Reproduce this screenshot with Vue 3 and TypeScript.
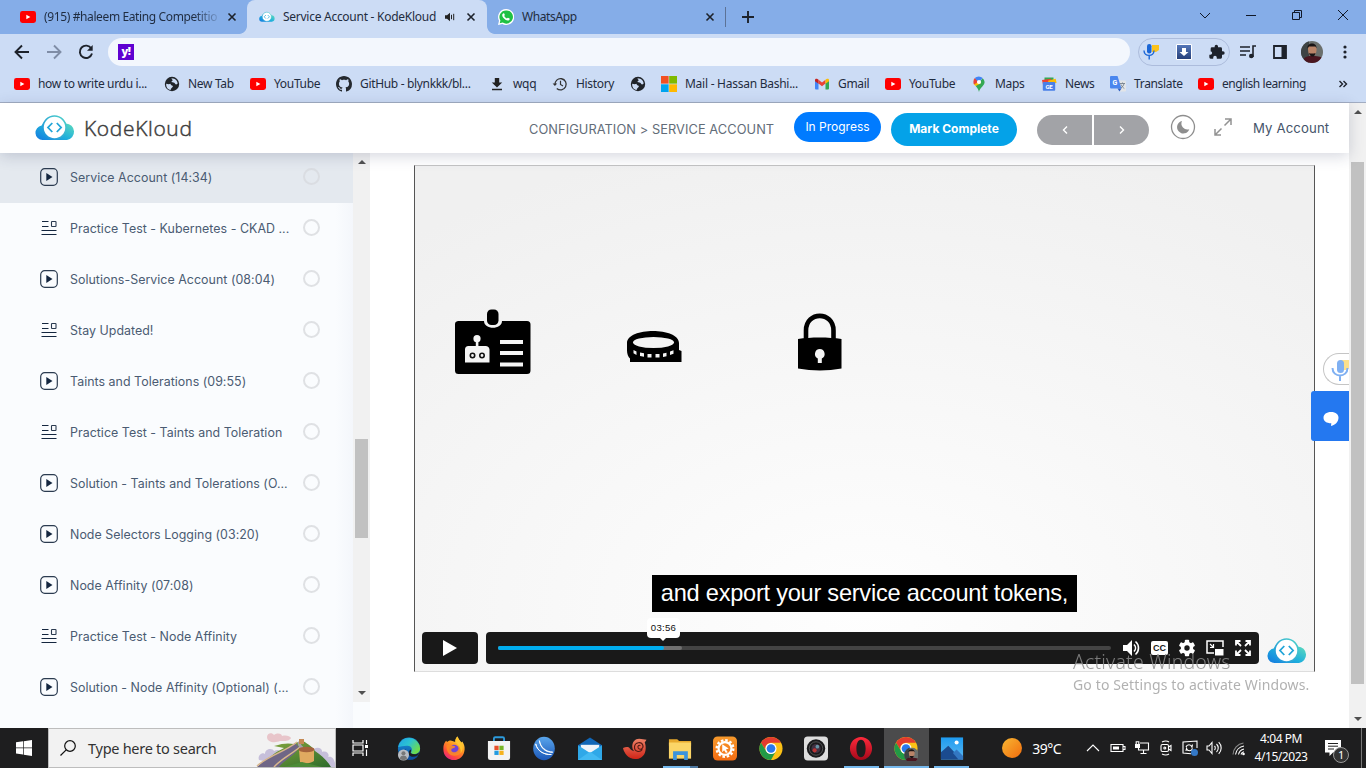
<script setup lang="ts">
interface Bookmark { icon: string; label: string }
interface Lesson { kind: 'video' | 'quiz'; title: string; active?: boolean }
interface App { icon: string; running?: boolean; active?: boolean; grouped?: boolean }

const bookmarks: Bookmark[] = [
  { icon: 'youtube', label: 'how to write urdu i...' },
  { icon: 'globe', label: 'New Tab' },
  { icon: 'youtube', label: 'YouTube' },
  { icon: 'github', label: 'GitHub - blynkkk/bl...' },
  { icon: 'download', label: 'wqq' },
  { icon: 'history', label: 'History' },
  { icon: 'globe', label: '' },
  { icon: 'microsoft', label: 'Mail - Hassan Bashi...' },
  { icon: 'gmail', label: 'Gmail' },
  { icon: 'youtube', label: 'YouTube' },
  { icon: 'maps', label: 'Maps' },
  { icon: 'news', label: 'News' },
  { icon: 'translate', label: 'Translate' },
  { icon: 'youtube', label: 'english learning' },
]

const lessons: Lesson[] = [
  { kind: 'video', title: 'Service Account (14:34)', active: true },
  { kind: 'quiz', title: 'Practice Test - Kubernetes - CKAD ...' },
  { kind: 'video', title: 'Solutions-Service Account (08:04)' },
  { kind: 'quiz', title: 'Stay Updated!' },
  { kind: 'video', title: 'Taints and Tolerations (09:55)' },
  { kind: 'quiz', title: 'Practice Test - Taints and Toleration' },
  { kind: 'video', title: 'Solution - Taints and Tolerations (O...' },
  { kind: 'video', title: 'Node Selectors Logging (03:20)' },
  { kind: 'video', title: 'Node Affinity (07:08)' },
  { kind: 'quiz', title: 'Practice Test - Node Affinity' },
  { kind: 'video', title: 'Solution - Node Affinity (Optional) (...' },
]

const apps: App[] = [
  { icon: 'edge' },
  { icon: 'firefox' },
  { icon: 'store' },
  { icon: 'swoosh' },
  { icon: 'mail' },
  { icon: 'shell' },
  { icon: 'folder', running: true, grouped: true },
  { icon: 'uc' },
  { icon: 'chrome' },
  { icon: 'camera' },
  { icon: 'opera', running: true },
  { icon: 'chromeuser', running: true, active: true },
  { icon: 'photos', running: true },
]
</script>

<template>
  <div class="screen">
    <svg class="defs" width="0" height="0" aria-hidden="true">
      <defs>
        <linearGradient id="gCloud" x1="0" y1="1" x2="1" y2="0"><stop offset="0" stop-color="#1478e0" /><stop offset=".45" stop-color="#1fb0dc" /><stop offset="1" stop-color="#6fe6b4" /></linearGradient>
        <linearGradient id="gRing" x1="0" y1="1" x2="1" y2="0"><stop offset="0" stop-color="#1b8ddd" /><stop offset="1" stop-color="#4fd3c9" /></linearGradient>
        <linearGradient id="gEdge" x1="0" y1="0" x2="1" y2=".6"><stop offset="0" stop-color="#1fa3e6" /><stop offset=".5" stop-color="#2cc3d2" /><stop offset="1" stop-color="#6fdc4a" /></linearGradient>
        <linearGradient id="gEdge2" x1="0" y1="0" x2="0" y2="1"><stop offset="0" stop-color="#1b9de2" /><stop offset="1" stop-color="#0c4a9c" /></linearGradient>
        <linearGradient id="gFox" x1=".8" y1="0" x2=".2" y2="1"><stop offset="0" stop-color="#ffe14a" /><stop offset=".4" stop-color="#ff9a1f" /><stop offset=".75" stop-color="#ff4a3d" /><stop offset="1" stop-color="#e0208a" /></linearGradient>
        <linearGradient id="gBlue" x1="0" y1="0" x2="0" y2="1"><stop offset="0" stop-color="#5aa6ec" /><stop offset="1" stop-color="#1b57b8" /></linearGradient>
        <linearGradient id="gShell" x1="0" y1="0" x2="0" y2="1"><stop offset="0" stop-color="#ee8066" /><stop offset="1" stop-color="#cf2417" /></linearGradient>
        <linearGradient id="gUc" x1="0" y1="0" x2="0" y2="1"><stop offset="0" stop-color="#f79a2c" /><stop offset="1" stop-color="#f36c12" /></linearGradient>
        <linearGradient id="gOpera" x1="0" y1="0" x2="0" y2="1"><stop offset="0" stop-color="#ff2a3c" /><stop offset="1" stop-color="#a5091a" /></linearGradient>
        <linearGradient id="gPhoto" x1="0" y1="0" x2="0" y2="1"><stop offset="0" stop-color="#1e9bf0" /><stop offset="1" stop-color="#5cb8f2" /></linearGradient>
        <linearGradient id="gSun" x1="0" y1="0" x2="1" y2="1"><stop offset="0" stop-color="#f7b733" /><stop offset="1" stop-color="#f26c0d" /></linearGradient>
        <linearGradient id="gHill" x1="0" y1="0" x2="1" y2="1"><stop offset="0" stop-color="#8dac3f" /><stop offset="1" stop-color="#2d6b2b" /></linearGradient>
        <linearGradient id="gDl" x1="0" y1="0" x2="0" y2="1"><stop offset="0" stop-color="#5578ba" /><stop offset="1" stop-color="#253f78" /></linearGradient>
        <clipPath id="cAvatar"><circle cx="11" cy="11" r="11" /></clipPath>
      </defs>

      <symbol id="i-youtube" viewBox="0 0 16 16"><rect y="2" width="16" height="12" rx="2.4" fill="#f00" /><path d="M6.3 5.7v4.6L10.4 8z" fill="#fff" /></symbol>
      <symbol id="i-globe" viewBox="0 0 16 16"><circle cx="8" cy="8" r="7.2" fill="#202429" /><path d="M2.2 7.7c2 .6 3.200.6 4.200 0 .7 1 .4 1.500 1.600 1.700 1 .3 1 .9.600 1.700-.6.900-1.800 1.300-1.900 2.800C3.600 13.500 1.900 11 2.200 7.700zM7.600 2.200c-.2 1 .9 1.300 1 2 .1.800-1.200.6-1.100 1.500.2 1 1.700.6 2.700 1 .9.500.9 1.700 2 1.700.8 0 .9-.7 1.500-.8C13.500 5 11.500 2.300 7.600 2.200z" fill="#ccdcf5" /></symbol>
      <symbol id="i-github" viewBox="0 0 16 16"><path fill="#24292f" d="M8 0C3.580 0 0 3.580 0 8c0 3.540 2.290 6.530 5.470 7.590.4.070.55-.17.55-.38 0-.19-.01-.82-.01-1.490-2.010.37-2.530-.49-2.690-.94-.09-.23-.48-.94-.82-1.130-.28-.15-.68-.52-.01-.53.63-.01 1.080.58 1.230.82.72 1.210 1.870.87 2.330.66.07-.52.28-.87.51-1.070-1.780-.2-3.640-.89-3.640-3.950 0-.87.31-1.590.82-2.150-.08-.2-.36-1.020.08-2.120 0 0 .67-.21 2.200.82.64-.18 1.320-.27 2-.27s1.360.09 2 .27c1.530-1.040 2.200-.82 2.200-.82.44 1.100.16 1.920.08 2.120.51.56.82 1.270.82 2.150 0 3.070-1.870 3.750-3.650 3.950.29.25.54.73.54 1.480 0 1.070-.01 1.930-.01 2.200 0 .21.15.46.55.38A8.010 8.010 0 0016 8c0-4.420-3.580-8-8-8z" /></symbol>
      <symbol id="i-download" viewBox="0 0 16 16"><path d="M5.800 2h4.400v4.500h3L8 11.400 2.800 6.500h3zM3 12.700h10v1.600H3z" fill="#222" /></symbol>
      <symbol id="i-history" viewBox="0 0 16 16"><path d="M3 8.800a5.600 5.600 0 1 1 1.800 3.600" fill="none" stroke="#333" stroke-width="1.300" /><path d="M.6 7.400h4.600L2.900 10z" fill="#333" /><path d="M8.500 4.800v3.600l2.500 1.500" fill="none" stroke="#333" stroke-width="1.200" /></symbol>
      <symbol id="i-microsoft" viewBox="0 0 16 16"><path d="M0 0h7.600v7.600H0z" fill="#f25022" /><path d="M8.200 0H16v7.600H8.200z" fill="#7fba00" /><path d="M0 8.300h7.600V16H0z" fill="#00a4ef" /><path d="M8.200 8.300H16V16H8.200z" fill="#ffb900" /></symbol>
      <symbol id="i-gmail" viewBox="0 0 16 16"><path d="M1 4.500 4.500 7v6.500H2a1 1 0 0 1-1-1z" fill="#4285f4" /><path d="M15 4.500 11.500 7v6.500H14a1 1 0 0 0 1-1z" fill="#34a853" /><path d="M4.500 3.800 8 6.500l3.500-2.700v3.800L8 10.200 4.500 7.600z" fill="#ea4335" /><path d="M1 4v1.200l3.500 2.600V3.800l-1-.8C2.400 2.200 1 2.800 1 4z" fill="#c5221f" /><path d="M15 4v1.200l-3.500 2.600V3.800l1-.8c1.100-.8 2.500-.2 2.500 1z" fill="#fbbc04" /></symbol>
      <symbol id="i-maps" viewBox="0 0 16 16"><path d="M8 16c-.6-2.800-2-4.300-3.300-5.900L11.700 2.300A5.700 5.700 0 0 1 13.600 6c0 4-4.600 5-5.600 10z" fill="#34a853" /><path d="M4.700 10.100A7 7 0 0 1 2.600 7.500L7 4.500l2.600 2.900z" fill="#fbbc04" /><path d="M2.400 6a5.600 5.600 0 0 1 1.400-3.900L8 5.600 3 8.400A6 6 0 0 1 2.400 6z" fill="#ea4335" /><path d="M3.800 2.100A5.600 5.600 0 0 1 11.700 2L7.500 6.600z" fill="#4285f4" /><circle cx="8" cy="6" r="2.100" fill="#fff" /></symbol>
      <symbol id="i-news" viewBox="0 0 16 16"><path d="M3.500 1.500h9v6h-9z" fill="#34a853" /><path d="m1 4 9-1.200 1 5-9 1z" fill="#ea4335" /><path d="m7 4.800 7.700-2 .9 4L8 9z" fill="#fbbc04" /><rect x="1.800" y="5.900" width="12.400" height="8.900" rx=".8" fill="#4a80e8" /><text x="8" y="12.500" text-anchor="middle" font-size="6" font-weight="700" font-family="Roboto, sans-serif" fill="#fff">GE</text></symbol>
      <symbol id="i-translate" viewBox="0 0 16 16"><path d="M6.500 4.500H15a1 1 0 0 1 1 1V14.500a1 1 0 0 1-1 1H9.500z" fill="#e3e5e8" /><path d="M1 0h6.500l4 12.500H1.300A1.200 1.200 0 0 1 0 11.300V1A1 1 0 0 1 1 0z" fill="#4a86ee" /><path d="m7.500 12.500 4 0-2 3z" fill="#2f5fc4" /><text x="4.700" y="8.700" text-anchor="middle" font-size="7" font-weight="700" font-family="Roboto, sans-serif" fill="#fff">G</text><path d="M10 7.500h5M12.500 6.500v1M14 7.500c-.5 2-1.500 3.500-3 4.500M11 8.500c.5 1.800 2 3 3.300 4" stroke="#75808c" stroke-width=".9" fill="none" /></symbol>
      <symbol id="i-whatsapp" viewBox="0 0 16 16"><path d="M8 0a8 8 0 0 0-7 11.800L0 16l4.300-1A8 8 0 1 0 8 0z" fill="#fff" /><path d="M8 1.400a6.600 6.600 0 0 0-5.600 10l-.7 2.900 3-.8A6.600 6.600 0 1 0 8 1.400z" fill="#1fc143" /><path d="M5.600 4.200c.5 0 .7.300 1.200 1.600.1.500-.5.900-.6 1.200.6 1.200 1.500 2 2.700 2.500.4-.2.700-.9 1.100-.8l1.600.8c.3 1.400-.8 2.100-1.700 2.100-2.800-.2-5.600-3-5.700-5.500 0-.9.700-1.800 1.400-1.900z" fill="#fff" /></symbol>
      <symbol id="i-kloud" viewBox="0 0 40 26">
        <path d="M7.500 25A7.300 7.300 0 0 1 6.600 10.500 14 14 0 0 1 14 4h12a11 11 0 0 1 5 4.500A8.300 8.300 0 0 1 32 25z" fill="url(#gCloud)" />
        <circle cx="19.500" cy="12.500" r="11.500" fill="#fff" stroke="url(#gRing)" stroke-width="1.500" />
        <path d="m17.300 8-4.300 4.500 4.300 4.500M21.800 8l4.300 4.500-4.300 4.500" fill="none" stroke="#22a5d8" stroke-width="1.800" />
      </symbol>
      <symbol id="i-avatar" viewBox="0 0 22 22"><g clip-path="url(#cAvatar)"><path d="M0 0h22v22H0z" fill="#6b706d" /><path d="M0 0h8v22H0z" fill="#3d4344" /><path d="M1 22c1-6 5-7 9-7 6 0 10 0 12 3v4z" fill="#4a1620" /><path d="M7 7c0-4 8-4 8.500 0 .4 4-1 8-4.300 8S7 12 7 7z" fill="#b98468" /><path d="M6.500 7.500C5.500 1.500 16 .5 15.500 7.500l-1-2-6.500 0zM8 12c1 .8 5 .8 6.500 0-.4 2.500-1.600 3.600-3.200 3.600S8.500 14 8 12z" fill="#191516" /></g></symbol>

      <symbol id="i-edge" viewBox="0 0 26 26"><circle cx="13" cy="13" r="12" fill="url(#gEdge2)" /><path d="M1.200 11.500A12 12 0 0 1 25 13c0 4-3 6-6.500 6-2.500 0-4-1-3-2.500 1.500-2 .7-6-4-6.500-4-.3-7.500 1-10.300 1.500z" fill="url(#gEdge)" /><path d="M10 13c-1.500 5 2 9 8 9 2 0 3.500-.5 5-1.500-3 5-9 6-13 3.500-4-3-4-8 0-11z" fill="#0e4f9f" /><path d="M14.500 14c2 2-1 3 1 4.500 3 1.500 7 .5 8.500-1.500-.5 3-3 5-6.500 5-4 0-7-3.500-3-8z" fill="#1e1e1f" /><circle cx="7" cy="20" r="6" fill="#b8bcc2" /><circle cx="7" cy="18.200" r="2.200" fill="#777" /><path d="M3.200 24c0-4.500 7.600-4.500 7.600 0-2 1.800-5.600 1.800-7.600 0z" fill="#777" /></symbol>
      <symbol id="i-firefox" viewBox="0 0 26 26"><path d="M2 9c.5-2 1.500-3.500 2.500-4.500L5.500 6c2-1.500 3-1.700 4-1.600L14.500 6c-.3-2.500.5-4.500 2.500-6 .5 3 2.500 4.500 4 6.500l1-1c2 3 2.700 5.500 2.500 8.500C24 21 19 25.500 13 25.500S1.500 21 1.500 14c0-2 0-3.500.5-5z" fill="url(#gFox)" /><circle cx="13" cy="14.500" r="5.500" fill="#7143d6" /><path d="M5 9.500c3-1.500 5-1 6.500.5 1.500.2 2.500.5 3 1-1 2-4 1-4.500 3.500 0 2 3 3.500 5.500 2 2-1.200 3.500-4 2.500-7 3.500 2 3.800 6 1.500 9-2.500 3-9 3.500-12 0-2-2.500-3-5.500-2.500-9z" fill="#ff8a21" opacity=".9" /><path d="M17 0c.5 3 2.500 4.500 4 6.500 2.500 4 1.500 9-1 12 1-5-1-8-5.500-12.500C14.200 3.500 15 1.500 17 0z" fill="#ffc52e" /></symbol>
      <symbol id="i-store" viewBox="0 0 26 26"><path d="M7.500 5V2.300C7.500 1.300 8 .8 9 .8h8c1 0 1.500.5 1.500 1.500V5" fill="none" stroke="#2d9bdc" stroke-width="2" /><path d="M1 5h24v18a2.500 2.500 0 0 1-2.500 2.500h-19A2.500 2.500 0 0 1 1 23z" fill="#f3f3f3" /><path d="M8 10h4.600v4.600H8z" fill="#e8502a" /><path d="M13.400 10H18v4.600h-4.600z" fill="#77b525" /><path d="M8 15.400h4.600V20H8z" fill="#239be0" /><path d="M13.400 15.400H18V20h-4.600z" fill="#f6b21c" /></symbol>
      <symbol id="i-swoosh" viewBox="0 0 26 26"><ellipse cx="13" cy="13" rx="11.700" ry="12.700" fill="url(#gBlue)" /><path d="M4 8c2 8 9 12 17 11.500-8 .5-15.500-4-17-11.500zM8 4.500c1 7 7 12 14.500 12.500-8 .5-13.500-5-14.500-12.500z" fill="#fff" stroke="#fff" stroke-width="1" /></symbol>
      <symbol id="i-mail" viewBox="0 0 26 26"><path d="M0 9.500 13 1l13 8.500V25.500H0z" fill="#1067b8" /><path d="M3 9h20v9H3z" fill="#eef4fa" /><path d="M0 9.500 13 18l13-8.500V25.500H0z" fill="#2fa8e8" /><path d="m0 25.500 12-8.500h2l12 8.500z" fill="#42b9f2" /></symbol>
      <symbol id="i-shell" viewBox="0 0 26 26"><path d="M0 12.500c3-1.500 6-1.500 7 0 2 2.500 3 3 5 3.500a7 7 0 0 1-2-5c0-5 3-8.500 7.500-8.500 3 0 5.500 1 8 1l-2 3c2.500 6 1.500 18-10.500 18C6 24.500 1 18 0 12.500z" fill="url(#gShell)" /><path d="M21 14c-3 4-9 2.500-8.500-3 .5-5 7.500-6 9-1.500 1.200 4-3.500 5.500-5 3-1-2 .8-3.800 2.300-2.500" fill="none" stroke="#511a15" stroke-width="1.200" /></symbol>
      <symbol id="i-folder" viewBox="0 0 26 26"><path d="M1 3h9l2 2h13v5H1z" fill="#e7a92d" /><path d="M1 6.500h24V24H1z" fill="#fbd567" /><path d="M5.500 16h16V25.500h-4v-5.500h-8v5.500h-4z" fill="#3b93dc" /></symbol>
      <symbol id="i-uc" viewBox="0 0 26 26"><rect x="0" y="0" width="26" height="26" rx="5" fill="url(#gUc)" /><circle cx="13" cy="13" r="9" fill="none" stroke="#fff" stroke-width="2.600" stroke-dasharray="2.700 2.010" /><circle cx="13" cy="13" r="7" fill="none" stroke="#fff" stroke-width="2.400" /><path d="M10 8.500 17 13l-3 1 2 3-2 1-2-3-2 2z" fill="#fff" /></symbol>
      <symbol id="i-chrome" viewBox="0 0 26 26"><circle cx="13" cy="13" r="12.500" fill="#fbc116" /><path d="M2.200 6.700a12.500 12.500 0 0 1 21.600 0H13a6 6 0 0 0-5.200 9.300z" fill="#e33b2e" /><path d="M2.200 6.700A12.500 12.500 0 0 0 13 25.500l5.200-9.500A6 6 0 0 1 7.800 16z" fill="#229a46" /><circle cx="13" cy="13" r="6" fill="#fff" /><circle cx="13" cy="13" r="4.700" fill="#2979ec" /></symbol>
      <symbol id="i-camera" viewBox="0 0 26 26"><rect x="0" y="0" width="26" height="26" rx="4" fill="#dedede" /><circle cx="13" cy="13" r="10" fill="#1a1a1c" /><circle cx="13" cy="13" r="7.300" fill="none" stroke="#666" stroke-width=".8" /><circle cx="13" cy="13" r="5" fill="#413142" /><circle cx="11.500" cy="15" r="2.200" fill="#b33" /><circle cx="14.500" cy="11" r="2" fill="#6993a5" /></symbol>
      <symbol id="i-opera" viewBox="0 0 26 26"><path fill-rule="evenodd" d="M13 .5C19.500.5 25 6 25 13S19.500 25.500 13 25.500 1 20 1 13 6.500.5 13 .5zM13 3.500C9.500 3.500 8 8 8 13s1.500 9.500 5 9.500 5-4.500 5-9.500-1.500-9.500-5-9.500z" fill="url(#gOpera)" /></symbol>
      <symbol id="i-chromeuser" viewBox="0 0 26 26"><use href="#i-chrome" x="0" y="0" width="26" height="26" /><use href="#i-avatar" x="11" y="12" width="16" height="16" /></symbol>
      <symbol id="i-photos" viewBox="0 0 26 26"><path d="M1 1h24v24H1z" fill="url(#gPhoto)" /><path d="m1 17 8-7 14 15H1z" fill="#1b4b8f" /><path d="m14 18 4-4 7 7v4h-5z" fill="#3377c2" /><circle cx="18" cy="6.500" r="2.200" fill="#fff" /></symbol>
    </svg>

    <header class="browser">
      <div class="tabs">
        <div class="tab first"><svg class="i16"><use href="#i-youtube" /></svg><span class="tab-title fade">(915) #haleem Eating Competitio</span><svg class="close" viewBox="0 0 8 8"><path d="m.5.5 7 7m0-7-7 7" /></svg></div>
        <div class="tab current">
          <svg class="i16"><use href="#i-kloud" /></svg><span class="tab-title">Service Account - KodeKloud</span>
          <svg class="speaker" viewBox="0 0 10 10"><path d="M0 3.300h2L5 .8v8.400L2 6.700H0z" fill="#222" /><path d="M6.500 2.800v4.400M8.700 1.800v6.400" stroke="#222" fill="none" /></svg>
          <svg class="close" viewBox="0 0 8 8"><path d="m.5.5 7 7m0-7-7 7" /></svg>
        </div>
        <div class="tab third"><svg class="i16"><use href="#i-whatsapp" /></svg><span class="tab-title">WhatsApp</span><svg class="close" viewBox="0 0 8 8"><path d="m.5.5 7 7m0-7-7 7" /></svg></div>
        <svg class="newtab" viewBox="0 0 12 12"><path d="M6 0v12M0 6h12" stroke="#1d222b" stroke-width="1.900" /></svg>
        <div class="winctl">
          <svg viewBox="0 0 10 10"><path d="m0 3 5 5 5-5" /></svg>
          <svg viewBox="0 0 10 10"><path d="M0 5.500h10" /></svg>
          <svg viewBox="0 0 10 10"><path d="M.5 2.500h7v7h-7zM2.500 2.500v-2h7v7h-2" /></svg>
          <svg viewBox="0 0 10 10"><path d="m0 0 10 10M10 0 0 10" /></svg>
        </div>
      </div>
      <div class="toolbar">
        <svg class="nav" viewBox="0 0 16 16"><path d="M15 8H2M8 1.500 1.500 8 8 14.500" /></svg>
        <svg class="nav dim" viewBox="0 0 16 16"><path d="M1 8h13M8 1.500 14.500 8 8 14.500" /></svg>
        <svg class="nav" viewBox="0 0 16 16"><path d="M13.300 4.500A6.200 6.200 0 1 0 14 9.500" /><path d="M14.700 1v5.800H9z" fill="#1d222b" stroke="none" /></svg>
        <div class="omnibox"><span class="yahoo">y!</span></div>
        <div class="exts">
          <svg width="16" height="16" viewBox="0 0 16 16"><path d="M8 1h7v5l-3 2H8z" fill="#fbc21b" /><rect x="3" y="0" width="4.500" height="9.500" rx="2.200" fill="#1a66d6" /><path d="M0 6.500C0 13 10 13 10 6.500M5.200 11v4.500" fill="none" stroke="#1a66d6" stroke-width="1.400" /></svg>
          <svg width="16" height="16" viewBox="0 0 16 16"><path d="M.5.500h15v15H.5z" fill="url(#gDl)" stroke="#fff" /><path d="M6 4h4v4h2.500L8 12 3.500 8H6z" fill="#fff" /></svg>
          <svg width="16" height="16" viewBox="0 0 24 24"><path fill="#1d222b" d="M22.500 11H21V7a2 2 0 0 0-2-2h-4V3.500a2.500 2.500 0 0 0-5 0V5H6a2 2 0 0 0-2 2v3.800h-.500a2.700 2.700 0 0 1 0 5.400H2V20a2 2 0 0 0 2 2h3.800v-1.500a2.700 2.700 0 0 1 5.400 0V22H19a2 2 0 0 0 2-2v-4h1.500a2.500 2.500 0 0 0 0-5z" /></svg>
        </div>
        <svg class="t1" viewBox="0 0 16 14"><path d="M0 2h10M0 6h10M0 10h6M13 12V1h3" stroke="#1d222b" stroke-width="1.600" fill="none" /><circle cx="11.300" cy="11" r="2.300" fill="#1d222b" /></svg>
        <svg class="t2" viewBox="0 0 14 14"><path d="M1 1h12v12H1z" fill="none" stroke="#1d222b" stroke-width="1.800" /><path d="M8.500 1H13v12H8.500z" fill="#1d222b" /></svg>
        <svg class="t3"><use href="#i-avatar" /></svg>
        <svg class="t4" viewBox="0 0 4 14"><circle cx="2" cy="2" r="1.600" /><circle cx="2" cy="7" r="1.600" /><circle cx="2" cy="12" r="1.600" /></svg>
      </div>
      <nav class="bookmarks">
        <span v-for="(b, i) in bookmarks" :key="i" class="bm"><svg class="i16"><use :href="'#i-' + b.icon" /></svg><span>{{ b.label }}</span></span>
        <svg class="more" viewBox="0 0 8 8"><path d="m.5 1 3 3-3 3M4.500 1l3 3-3 3" fill="none" stroke="#1d222b" stroke-width="1.400" /></svg>
      </nav>
    </header>

    <div class="page">
      <div class="site">
        <header class="topbar">
          <svg class="logo"><use href="#i-kloud" /></svg>
          <span class="brand">KodeKloud</span>
          <span class="crumbs">CONFIGURATION &gt; SERVICE ACCOUNT</span>
          <span class="progress">In Progress</span>
          <span class="complete">Mark Complete</span>
          <div class="pager">
            <span><svg viewBox="0 0 6 8"><path d="M5 .5 1.500 4 5 7.500" /></svg></span>
            <span><svg viewBox="0 0 6 8"><path d="M1 .5 4.500 4 1 7.500" /></svg></span>
          </div>
          <svg class="moon" viewBox="0 0 26 26"><circle cx="13" cy="13" r="11.500" fill="none" stroke="#8e8e8e" stroke-width="1.300" /><path d="M12 7a6.300 6.300 0 1 0 7.300 8.200A6 6 0 0 1 12 7z" fill="#8e8e8e" /></svg>
          <svg class="expand" viewBox="0 0 18 18"><path d="M10.500 7.500 17 1M11 1h6v6M7.500 10.500 1 17M1 11v6h6" fill="none" stroke="#929292" stroke-width="1.500" /></svg>
          <span class="account">My Account</span>
        </header>

        <div class="body">
          <aside class="sidebar">
            <ul>
              <li v-for="l in lessons" :key="l.title" :class="{ active: l.active }">
                <svg v-if="l.kind === 'video'" class="kind" viewBox="0 0 18 18"><rect x=".7" y=".7" width="16.600" height="16.600" rx="4" fill="none" stroke="#2b3b50" stroke-width="1.200" /><path d="M6.300 5v8l6.200-4z" fill="#14263f" /></svg>
                <svg v-else class="kind" viewBox="0 0 18 18"><path d="M2 2.500h6.500M2 7.500h6.500M1.500 11.500h15M1.500 15.500h15" stroke="#14263f" stroke-width="1.100" /><rect x="11.500" y="2.500" width="4.500" height="5" rx=".6" fill="none" stroke="#2b3b50" stroke-width="1.100" /></svg>
                <span class="title">{{ l.title }}</span><i class="ring"></i>
              </li>
            </ul>
            <div class="scroll side"><i class="up"></i><b></b><i class="down"></i></div>
          </aside>

          <main class="content">
            <section class="video">
              <svg class="glyphs" viewBox="0 0 430 100">
                <path d="M28 31h26c0 9 18 9 18 0h25a3.500 3.500 0 0 1 3.500 3.500v46a3.500 3.500 0 0 1-3.500 3.500H28.500a3.500 3.500 0 0 1-3.500-3.500v-46A3.500 3.500 0 0 1 28 31z" fill="#000" />
                <rect x="57" y="19.500" width="11.500" height="15.500" rx="4.500" fill="#000" />
                <circle cx="47" cy="48.700" r="3.600" fill="#f4f4f4" /><path d="M45.800 50h2.600v7h-2.600zM35 59.500a3.500 3.500 0 0 1 3.500-3.500h17a4 4 0 0 1 4 3.500V72.500H35zM70 50h23v4H70zM70 61h23v4H70zM70 72.500h23v4H70z" fill="#f4f4f4" />
                <g fill="none" stroke="#111" stroke-width="1.600"><circle cx="42.500" cy="65.500" r="2.200" /><circle cx="52" cy="65.500" r="2.200" /></g>
                <path d="M197 53c0-16 52-16 52 0v7l2.500 1v11H200v-3.500c-2-1.500-3-5-3-8z" fill="#000" /><ellipse cx="223.500" cy="52.500" rx="20.500" ry="5.500" fill="#f4f4f4" />
                <path d="m203.500 60 3 1.500v3.500l-3-1.800zM210 62.500l4 .8v3.500l-4-.8zM217.500 64h4v3.500h-4zM225.500 64h4v3.500h-4zM233 63.500l3.500-.7v3.500l-3.500.7zM240 61.500l3.500-1.300v3.500L240 65z" fill="#f4f4f4" />
                <path d="M376 52V40.500c0-19.500 27.500-19.500 27.500 0v11.500" fill="none" stroke="#000" stroke-width="4.600" />
                <path d="M368 49c12-2 31-2 43.500 0v29.500c-14 2.500-29 2.500-43.500 0z" fill="#000" /><path d="M389.800 59a5 5 0 0 1 2 9.500v4.500h-4v-4.500a5 5 0 0 1 2-9.500z" fill="#f4f4f4" />
              </svg>
              <div class="caption">and export your service account tokens,</div>
              <div class="controls">
                <button class="play" aria-label="Play"><svg viewBox="0 0 14 16"><path d="M0 0v16l14-8z" fill="#fff" /></svg></button>
                <div class="bar">
                  <div class="track"><i class="buffer"></i><i class="played"></i><span class="tip">03:56</span></div>
                  <svg class="c1" viewBox="0 0 18 18"><path d="M0 6h4l5-5v16l-5-5H0z" fill="#fff" /><path d="M11 5.500c2 2 2 5 0 7M12.500 2.500c4 3.500 4 9.500 0 13" fill="none" stroke="#fff" stroke-width="1.600" /></svg>
                  <span class="cc">CC</span>
                  <svg class="c3" viewBox="0 0 18 18"><g fill="#fff"><circle cx="9" cy="9" r="6.200" /><rect v-for="a in [0, 60, 120]" :key="a" x="6.800" y=".8" width="4.400" height="16.400" rx="1" :transform="`rotate(${a} 9 9)`" /></g><circle cx="9" cy="9" r="2.700" fill="#191919" /></svg>
                  <svg class="c4" viewBox="0 0 18 16"><path d="M8 13H1V1h16v6" fill="none" stroke="#fff" stroke-width="1.500" /><path d="M9 9h8.500v6.500H9z" fill="#fff" /><path d="m4 4 3 3M7.500 4v3.500H4" fill="none" stroke="#fff" stroke-width="1.200" /></svg>
                  <svg class="c5" viewBox="0 0 16 16"><path d="M1 5.500V1h4.500M10.500 1H15v4.500M15 10.500V15h-4.500M5.500 15H1v-4.500M1 1l5 5M15 1l-5 5M1 15l5-5M15 15l-5-5" fill="none" stroke="#fff" stroke-width="1.800" /></svg>
                </div>
                <svg class="logo"><use href="#i-kloud" /></svg>
              </div>
            </section>
            <div class="mic"><svg viewBox="0 0 20 22"><path d="M10 1h9v8l-4 2h-5z" fill="#fbe08a" /><rect x="6" y="1" width="7" height="13" rx="3.500" fill="#7fb0f2" /><path d="M1.500 9c0 10 15 10 15 0M9 16.500V22" fill="none" stroke="#7fb0f2" stroke-width="2" /></svg></div>
            <div class="chat"><svg viewBox="0 0 16 14"><path d="M8 0c5 0 7.500 2.500 7.500 5.500 0 4-3 7.500-7.500 8.500l.3-2.800C3.500 11.200.5 9 .5 5.700S3.500 0 8 0z" fill="#fff" /></svg></div>
          </main>
        </div>
      </div>
      <div class="scroll main"><i class="up"></i><b></b><i class="down"></i></div>
      <div class="activate"><p>Activate Windows</p><small>Go to Settings to activate Windows.</small></div>
    </div>

    <footer class="taskbar">
      <svg class="start" viewBox="0 0 16 16"><path d="M0 2.300 7 1.300v6.200H0zM7.700 1.200 16 0v7.500H7.700zM0 8.200h7v6.300l-7-1zM7.700 8.200H16V16l-8.300-1.300z" fill="#fff" /></svg>
      <div class="search">
        <svg class="lens" viewBox="0 0 16 16"><circle cx="10" cy="6" r="5.300" fill="none" stroke="#111" stroke-width="1.200" /><path d="M6.200 9.800.5 15.500" stroke="#111" stroke-width="1.200" /></svg>
        <span>Type here to search</span>
        <svg class="scene" viewBox="0 0 80 38">
          <path d="M11 8c0-4 5-5 7-2 4-3 8-1 8 1 4-1 8 0 9 2-2 4-9 3-11 3-4 2-13 2-13-4z" fill="#e8c5ca" />
          <path d="M3 31c-2-5 4-8 6-6 0-6 8-6 9-3 5-3 8 1 7 4l-8 8zM58 20c4-3 9 0 8 3 5-2 8 3 6 5 4-1 6 2 7 6v4H56z" fill="#c6bfda" />
          <path d="M18 17c9-3 15-3 20-2l8-4c5 4 9 5 13 11 6 4 12 9 16 16H4c8-9 14-14 24-19z" fill="url(#gHill)" />
          <path d="M1 38c10-11 27-16 38-24l4 4c-3 8-15 13-20 20z" fill="#6f6686" /><path d="M1 37c12-11 28-14 40-24M18 38c8-9 18-13 26-20" stroke="#d9b78c" stroke-width="1.500" fill="none" />
          <path d="M43 13c0 6 6 8 12 10" fill="none" stroke="#a3a1ac" stroke-width="3" /><path d="M43 10h5v5h-5z" fill="#c58a55" />
          <path d="M43 21h15v11c-4 3-11 3-14 1z" fill="#e0aa60" /><ellipse cx="50.500" cy="20.500" rx="8" ry="2.700" fill="#a4633c" /><path d="m28 38 18-5 20 5z" fill="#4c8b37" />
        </svg>
      </div>
      <svg class="taskview" viewBox="0 0 16 16"><path d="M1 0v3h10V0M1 16v-3h10v3M1 5h10v6H1zM14.500 0v4M14.500 9.500V16" fill="none" stroke="#fff" stroke-width="1.200" /><path d="M13 5h3v3h-3z" fill="#fff" /></svg>
      <div class="apps">
        <div v-for="a in apps" :key="a.icon" class="app" :class="{ running: a.running, active: a.active, grouped: a.grouped }"><svg><use :href="'#i-' + a.icon" /></svg></div>
      </div>
      <svg class="sun" viewBox="0 0 20 20"><circle cx="10" cy="10" r="10" fill="url(#gSun)" /></svg>
      <span class="temp">39°C</span>
      <div class="tray">
        <svg viewBox="0 0 16 16"><path d="M2 11l6-6 6 6" /></svg>
        <svg viewBox="0 0 16 16"><path d="M1 4.500h12v7H1zM13.500 6.500H15v3h-1.500" /><path d="M3 6.500h6v3H3z" fill="#fff" stroke="none" /></svg>
        <svg viewBox="0 0 16 16"><path d="M6 3h8.500v7H4.500V8M9.500 10v3.500M6.500 13.500h6" /><path d="M1 4h5v4H1z" fill="#fff" stroke="none" /><path d="M2.200 4V1.800h2.600V4" /></svg>
        <svg viewBox="0 0 16 16"><rect x="3" y="4.500" width="7.500" height="7" rx="1.500" /><path d="M10.500 7 13 5.500v5L10.500 9M4 2c2.500-1.300 5-1.300 7 0M4 14c2.500 1.300 5 1.300 7 0" /><circle cx="6.800" cy="8" r="1" /></svg>
        <svg viewBox="0 0 16 16"><path d="M15 8V1L1 2v11l8 .7" /><path d="M4 7c1-3 5-3 6 0l.5-2.500M10.500 8.500c-1 3-5 3-6 0L4 11" /><circle cx="12.500" cy="12.500" r="3.500" fill="#3478c6" stroke="none" /></svg>
        <svg viewBox="0 0 16 16"><path d="M0 6h2l3-3.500v11L2 10H0zM7.500 6c1 1 1 3 0 4M9.500 4c2.300 2.300 2.300 5.700 0 8M11.700 2.200c3.300 3.300 3.300 8.300 0 11.600" /></svg>
        <svg viewBox="0 0 16 16"><path d="M4.500 14.500A10 10 0 0 1 13 6M7.500 14.500A7 7 0 0 1 13 9M10 14.500a4 4 0 0 1 3-2.800" /><path d="M2 14.500A12 12 0 0 1 12.500 3" stroke="#888" /><circle cx="12.500" cy="14" r="1.300" fill="#fff" stroke="none" /></svg>
      </div>
      <div class="clock"><span>4:04 PM</span><span>4/15/2023</span></div>
      <div class="notify"><svg viewBox="0 0 16 16"><path d="M0 0h16v12.500H8L4.500 16v-3.500H0z" fill="#fff" /><path d="M3 3.500h10M3 6.200h10M3 9h6" stroke="#222" /></svg><em>1</em></div>
      <i class="peek"></i>
    </footer>
  </div>
</template>

<style>
html, body { margin: 0; overflow: hidden; }
</style>

<style scoped>
* { box-sizing: border-box; }
.screen { width: 1366px; height: 768px; overflow: hidden; position: relative; display: flex; flex-direction: column; background: #fff; font-family: "Noto Sans", "Open Sans", sans-serif; color: #1f2c40; }
.defs { position: absolute; }
svg { display: block; flex: none; overflow: visible; }
.i16 { width: 16px; height: 16px; }

.browser { height: 103px; flex: none; background: #ccdcf5; border-bottom: 1px solid #a2adc2; font-size: 12px; }
.tabs { height: 34px; background: #85ade8; display: flex; align-items: center; position: relative; }
.tab { height: 34px; display: flex; align-items: center; flex: none; }
.tab-title { white-space: nowrap; letter-spacing: -0.27px; flex: none; margin-top: -1px; }
.first { width: 247px; padding: 0 11px 0 20px; }
.first .tab-title { width: 174px; margin-left: 8px; letter-spacing: -0.38px; }
.fade { -webkit-mask-image: linear-gradient(90deg, #000 150px, transparent 178px); mask-image: linear-gradient(90deg, #000 150px, transparent 178px); }
.first .close { margin-left: 10px; }
.current { width: 240px; background: #ccdcf5; border-radius: 8px 8px 0 0; padding-left: 12px; }
.current .tab-title { width: 154px; margin-left: 8px; }
.speaker { width: 10px; height: 10px; margin-left: 8px; }
.current .close { margin-left: 12px; }
.third { padding-left: 11px; }
.third .tab-title { width: 176px; margin-left: 8px; letter-spacing: -.4px; }
.third .close { margin-left: 8px; }
.third::after { content: ""; width: 1px; height: 20px; background: #5c7296; margin-left: 11px; }
.tabs::before { content: ""; position: absolute; left: 239px; bottom: 0; width: 256px; height: 8px; background: radial-gradient(circle at 0 0, #85ade8 7.500px, #ccdcf5 8.300px) left / 8px 8px no-repeat, radial-gradient(circle at 100% 0, #85ade8 7.500px, #ccdcf5 8.300px) right / 8px 8px no-repeat; }
.close { width: 8px; height: 8px; stroke: #1d222b; stroke-width: 1.600; }
.newtab { width: 12px; height: 12px; margin-left: 16px; }
.winctl { margin-left: auto; display: flex; gap: 36px; padding-right: 18px; margin-top: -5px; }
.winctl svg { width: 10px; height: 10px; stroke: #101828; fill: none; stroke-width: 1; }
.toolbar { height: 36px; display: flex; align-items: center; padding-left: 14px; }
.nav { width: 16px; height: 16px; margin-right: 16px; fill: none; stroke: #1d222b; stroke-width: 1.900; }
.nav.dim { stroke: #7f8da6; }
.nav:nth-child(3) { margin-right: 14px; }
.omnibox { width: 1022px; height: 28px; border-radius: 14px; background: #f3f7fd; padding: 6px 10px; }
.yahoo { display: block; width: 16px; height: 16px; background: #5f01d1; color: #fff; font: 800 11px/14px "Open Sans", sans-serif; text-align: center; letter-spacing: -0.500px; }
.exts { width: 92px; height: 28px; border: 1px solid #acbcdc; border-radius: 14px; margin-left: 8px; display: flex; gap: 16px; align-items: center; padding-left: 5px; }
.exts svg { width: 16px; }
.t1 { width: 16px; height: 14px; margin-left: 10px; }
.t2 { width: 14px; height: 14px; margin-left: 17px; }
.t3 { width: 22px; height: 22px; margin-left: 14px; }
.t4 { width: 4px; height: 14px; margin-left: 20px; fill: #1d222b; }
.bookmarks { height: 28px; padding-left: 14px; display: grid; align-items: center; grid-template-columns: 150px 86px 86px 153px 63px 78px 31px 153px 71px 86px 70px 69px 88px 141px 8px; }
.bm { display: flex; align-items: center; gap: 8px; white-space: nowrap; letter-spacing: -0.330px; }
.bm:nth-child(8) { letter-spacing: -.26px; }
.bm:nth-child(14) { letter-spacing: -.44px; }
.bm span { margin-top: -1px; }
.more { width: 8px; height: 8px; }

.page { height: 625px; display: flex; position: relative; }
.site { width: 1349px; height: 625px; display: flex; flex-direction: column; }
.topbar { height: 50px; flex: none; display: flex; align-items: center; background: #fff; box-shadow: 0 3px 14px rgba(40, 50, 90, .2); position: relative; z-index: 2; padding-left: 35px; font-family: Inter, sans-serif; white-space: nowrap; }
.logo { width: 40px; height: 26px; }
.brand { font: 300 21px/28px "Open Sans", sans-serif; color: #3c3c3c; margin-left: 9px; width: 109px; letter-spacing: .65px; -webkit-text-stroke: .45px #3c3c3c; margin-top: -1px; }
.crumbs { margin-left: 336px; width: 245px; font-size: 12.800px; color: #626c78; letter-spacing: .08px; margin-top: 3px; }
.progress { margin-left: 20px; width: 87px; height: 30px; border-radius: 15px; background: #007bff; color: #fff; font-size: 12px; line-height: 30px; text-align: center; margin-top: -2px; }
.complete { margin-left: 10px; width: 126px; height: 33px; border-radius: 17px; background: #04a2e8; color: #fff; font-size: 12px; font-weight: 700; line-height: 32px; text-align: center; margin-top: 2px; }
.pager { display: flex; gap: 2px; margin-left: 20px; margin-top: 4px; }
.pager span { width: 55px; height: 30px; background: #a2a3a7; display: grid; place-items: center; }
.pager span:first-child { border-radius: 15px 0 0 15px; }
.pager span:last-child { border-radius: 0 15px 15px 0; }
.pager svg { width: 6px; height: 8px; fill: none; stroke: #fff; stroke-width: 1.400; }
.moon { width: 26px; height: 26px; margin-left: 21px; margin-top: -2px; }
.expand { width: 18px; height: 18px; margin-left: 18px; margin-top: -2px; }
.account { margin-left: 21px; font-size: 13.200px; letter-spacing: .12px; color: #45546a; }

.body { flex: 1; display: flex; min-height: 0; }
.sidebar { width: 370px; background: #fafcfe; display: flex; overflow: hidden; }
ul { margin: -1px 0 0; padding: 0; width: 353px; list-style: none; background: linear-gradient(90deg, transparent 95%, rgba(225, 230, 242, .25)); }
li { height: 51px; display: flex; align-items: center; padding-left: 40px; font: 400 12.400px/20px Inter, sans-serif; color: #4a5b72; }
li.active { background: #e4e9ef; }
.kind { width: 18px; height: 18px; margin-top: -2px; }
.title { margin-left: 12px; width: 233px; white-space: nowrap; letter-spacing: .04px; margin-top: 1px; }
.ring { width: 17px; height: 17px; border: 2px solid #dfe1e4; border-radius: 50%; margin-top: -2px; }
.active .ring { border-color: #dadde2; }
.scroll { width: 17px; background: #f1f1f1; display: flex; flex-direction: column; align-items: center; flex: none; }
.scroll b { width: 13px; background: #c1c1c1; }
.scroll i { width: 0; height: 0; border: 4px solid transparent; }
.scroll .up { border-top: 0; border-bottom-color: #505050; }
.scroll .down { border-bottom: 0; border-top-color: #505050; }
.side { height: 549px; padding-top: 7px; }
.side b { height: 99px; margin: 275px 0 153px; }
.main { height: 625px; padding-top: 7px; }
.main b { height: 522px; margin: 48px 0 33px; }

.content { flex: 1; padding: 12px 0 0 44px; position: relative; }
.video { width: 901px; height: 507px; border: 1px solid #555; border-top-color: #c4c4c4; border-bottom-color: #ddd; background: radial-gradient(ellipse 720px 480px at 50% 88%, #fefefe 0%, #f7f7f7 50%, #f0f0f0 100%); position: relative; }
.glyphs { position: absolute; left: 15px; top: 124px; width: 430px; height: 100px; }
.caption { position: absolute; left: 237px; top: 409px; width: 425px; height: 37px; background: #000; color: #fff; font: 23.600px/36px "Liberation Sans", Arial, sans-serif; text-align: center; white-space: nowrap; letter-spacing: -.25px; }
.controls { position: absolute; left: 7px; top: 466px; display: flex; }
.play { width: 56px; height: 32px; border: 0; border-radius: 4px; background: #191919; padding: 0 0 0 21px; }
.play svg { width: 14px; height: 16px; }
.bar { margin-left: 8px; width: 773px; height: 32px; border-radius: 4px; background: #191919; display: flex; align-items: center; padding-left: 12px; }
.track { width: 613px; height: 4px; background: #444; border-radius: 2px; position: relative; }
.track i { position: absolute; left: 0; top: 0; height: 4px; border-radius: 2px; }
.track .buffer { width: 184px; background: #717171; }
.track .played { width: 166px; background: #00adef; }
.tip { position: absolute; left: 149px; top: -28px; width: 33px; height: 20px; border-radius: 4px; background: #fff; color: #111; font: 9.600px/19px "Liberation Sans", Arial, sans-serif; letter-spacing: .25px; text-align: center; }
.tip::after { content: ""; position: absolute; left: 13px; top: 20px; border: 3px solid transparent; border-top-color: #fff; }
.c1 { width: 18px; height: 18px; margin-left: 12px; }
.cc { width: 17px; height: 14px; background: #fff; color: #191919; border-radius: 2px; margin-left: 10px; font: 700 9px/14px "Liberation Sans", Arial, sans-serif; text-align: center; }
.c3 { width: 18px; height: 18px; margin-left: 10px; }
.c4 { width: 18px; height: 16px; margin-left: 10px; }
.c5 { width: 16px; height: 16px; margin-left: 11px; }
.controls .logo { margin: 6px 0 0 8px; }
.mic { position: absolute; right: 0; top: 200px; width: 26px; height: 32px; border: 1px solid #c5c5c5; border-right: 0; border-radius: 16px 0 0 16px; background: #fff; overflow: hidden; }
.mic svg { width: 20px; height: 22px; margin: 5px 0 0 7px; }
.chat { position: absolute; right: 0; top: 238px; width: 38px; height: 50px; border-radius: 3px 0 0 3px; background: #2478f0; display: grid; place-items: center; padding: 5px 0 0 2px; }
.chat svg { width: 16px; height: 14px; }
.activate { position: absolute; left: 1073px; top: 547px; color: #8d8d8d; opacity: .85; z-index: 4; white-space: nowrap; }
.activate p { margin: 0; font-size: 19.500px; line-height: 24px; font-weight: 300; letter-spacing: .2px; }
.activate small { display: block; font-size: 14px; line-height: 20px; color: #a4a4a4; margin-top: 1px; letter-spacing: .13px; }

.taskbar { height: 40px; background: #1e1e1f; display: flex; align-items: center; color: #fff; position: relative; }
.start { width: 16px; height: 16px; margin-left: 16px; flex: none; }
.search { width: 288px; height: 40px; flex: none; margin-left: 16px; background: #f2f2f2; border: 1px solid #bdbdbd; color: #333; display: flex; align-items: center; padding-left: 11px; font-size: 14.500px; overflow: hidden; white-space: nowrap; letter-spacing: -.27px; }
.search span { width: 168px; margin-left: 12px; flex: none; }
.lens { width: 16px; height: 16px; }
.scene { width: 80px; height: 38px; }
.taskview { width: 16px; height: 16px; margin-left: 16px; }
.apps { display: flex; margin-left: 18px; height: 40px; }
.app { width: 45.250px; height: 40px; display: grid; place-items: center; position: relative; flex: none; }
.app svg { width: 24px; height: 25px; }
.app.active { background: #4b4b4c; }
.app.running::after { content: ""; position: absolute; bottom: 0; left: 5px; right: 5px; height: 2px; background: #76b9ed; }
.app.active::after { left: 0; right: 0; }
.app.grouped::after { background: linear-gradient(90deg, #76b9ed 78%, #4d77a0 78%); }
.sun { width: 20px; height: 20px; margin-left: 28px; }
.temp { font-size: 14px; margin-left: 10px; width: 53px; letter-spacing: -.5px; }
.tray { display: flex; gap: 8.300px; }
.tray svg { width: 16px; height: 16px; fill: none; stroke: #fff; stroke-width: 1.100; }
.clock { width: 70px; margin-left: -1px; font-size: 12px; line-height: 18px; display: flex; flex-direction: column; text-align: center; letter-spacing: -.45px; white-space: nowrap; margin-top: -1px; }
.notify { position: relative; margin-left: 9px; }
.notify svg { width: 16px; height: 16px; }
.notify em { position: absolute; left: 8px; top: 7px; width: 16px; height: 16px; border: 1px solid #999; border-radius: 50%; background: #333; font: 11px/14px "Noto Sans", sans-serif; text-align: center; }
.peek { position: absolute; right: 4px; top: 0; width: 1px; height: 40px; background: #777; }
</style>
